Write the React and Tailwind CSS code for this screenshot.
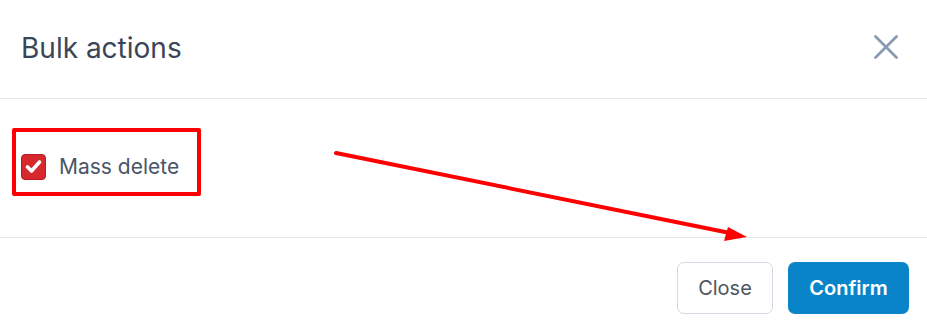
import { X } from "lucide-react";

function App() {
  return (
    <div
      className="relative w-[927px] h-[333px] bg-white overflow-hidden"
      style={{ fontFamily: "Inter, 'Noto Sans', sans-serif" }}
    >
      {/* Header */}
      <div className="h-[99px] flex items-center justify-between pl-[21px] pr-[20px] border-b border-[#e3e6ea]">
        <h2 className="text-[28px] leading-none text-[#3a4658] -mt-[3px]">Bulk actions</h2>
        <button className="text-[#8a9ab0] -mt-[4px]">
          <X size={42} strokeWidth={1.6} />
        </button>
      </div>

      {/* Body */}
      <div className="h-[139px] pt-[29px] pl-[12px] border-b border-[#e3e6ea]">
        <div className="w-[189px] h-[68px] border-[4px] border-[#ff0000] rounded-[2px] flex items-center pl-[5px] pt-[9px] gap-[13px]">
          <span className="w-[25px] h-[26px] rounded-[4px] bg-[#d6282d] border border-[#b81c22] flex items-center justify-center">
            <svg width="17" height="15" viewBox="0 0 17 15">
              <path d="M2.5 8 L6.5 12 L14.5 3" fill="none" stroke="#fff" strokeWidth="3.6" strokeLinecap="round" strokeLinejoin="round" />
            </svg>
          </span>
          <span className="text-[21px] text-[#4a5568]">Mass delete</span>
        </div>
      </div>

      {/* Footer */}
      <div className="flex justify-end items-start gap-[15px] pt-[24px] pr-[18px]">
        <button className="w-[96px] h-[52px] rounded-[7px] border border-[#d3dae3] text-[20px] text-[#4b5563] bg-white">
          Close
        </button>
        <button className="w-[121px] h-[52px] rounded-[7px] bg-[#0a84c8] text-[20px] font-semibold text-white">
          Confirm
        </button>
      </div>

      {/* Annotation arrow */}
      <svg className="absolute inset-0 pointer-events-none" width="927" height="333">
        <line x1="336" y1="153" x2="730" y2="233" stroke="#ff0000" strokeWidth="4" strokeLinecap="round" />
        <polygon points="747,237 724,241 728,227" fill="#ff0000" />
      </svg>
    </div>
  );
}

export default App;
